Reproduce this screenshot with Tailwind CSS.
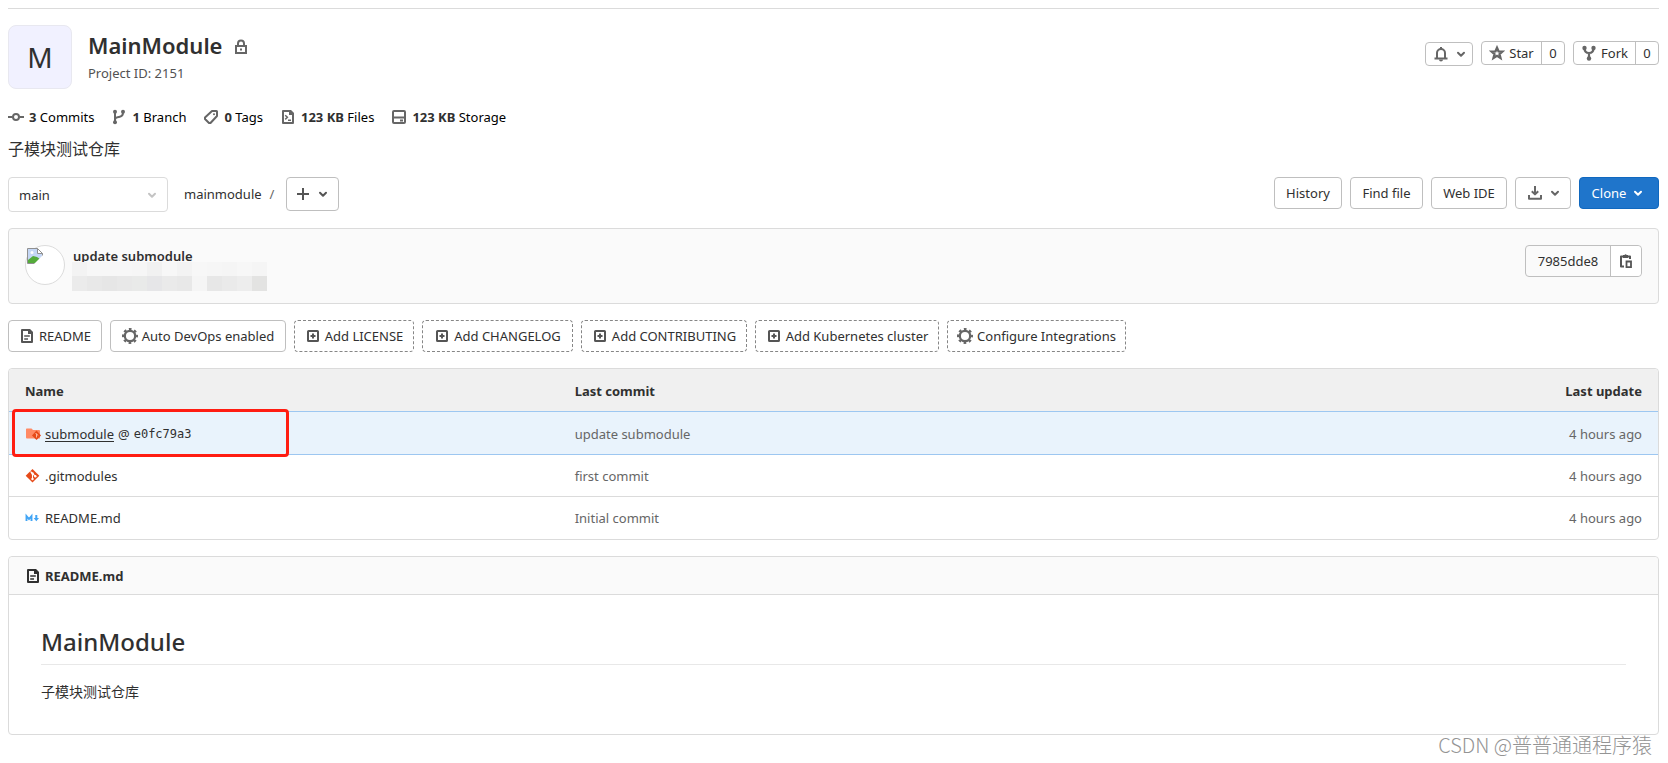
<!DOCTYPE html>
<html lang="en">
<head>
<meta charset="utf-8">
<title>MainModule</title>
<script src="https://cdn.jsdelivr.net/npm/@tailwindcss/browser@4"></script>
</head>
<body class="relative min-h-screen bg-white pt-2 pr-[9px] pb-7 pl-2 font-['Noto_Sans','Noto_Sans_CJK_SC',sans-serif] text-[13px] leading-5 text-[#303030]">
<svg class="hidden" aria-hidden="true">
  <symbol id="chevron" viewBox="0 0 16 16"><path d="M5 6.700 8 9.700l3-3" fill="none" stroke="currentColor" stroke-width="2" stroke-linecap="round" stroke-linejoin="round"/></symbol>
  <symbol id="lock" viewBox="0 0 16 16"><path d="M3 7h10v7H3zM5 7V4.500a3 3 0 0 1 6 0V7" fill="none" stroke="currentColor" stroke-width="2"/><path d="M7 9.500h2v2H7z" fill="currentColor"/></symbol>
  <symbol id="commit" viewBox="0 0 16 16"><path d="M0 8h4.500M11.500 8H16" fill="none" stroke="currentColor" stroke-width="2"/><circle cx="8" cy="8" r="3" fill="none" stroke="currentColor" stroke-width="2"/></symbol>
  <symbol id="branch" viewBox="0 0 16 16"><path d="M4 3v10M4 10.500c0-2 2-2.200 4-2.500s4-1 4-4.500" fill="none" stroke="currentColor" stroke-width="2"/><g fill="currentColor"><circle cx="4" cy="2.800" r="2"/><circle cx="4" cy="13.200" r="2"/><circle cx="12" cy="2.800" r="2"/></g></symbol>
  <symbol id="tag" viewBox="0 0 16 16"><path d="M9 2h4.500a.5.5 0 0 1 .5.5V7l-6.500 7H6l-4-4V8.500z" fill="none" stroke="currentColor" stroke-width="2" stroke-linejoin="round"/><circle cx="11" cy="5.200" r="1" fill="currentColor"/></symbol>
  <symbol id="codefile" viewBox="0 0 16 16"><path d="M3 2h7l3 3v9H3z" fill="none" stroke="currentColor" stroke-width="2" stroke-linejoin="round"/><path d="M9 1h2l3 3v2H9z" fill="currentColor"/><path d="M5.200 6.200 7.400 8.300 5.200 10.400M8 11.300h3" fill="none" stroke="currentColor" stroke-width="1.500"/></symbol>
  <symbol id="disk" viewBox="0 0 16 16"><rect x="2" y="2" width="12" height="12" rx="1" fill="none" stroke="currentColor" stroke-width="2"/><path d="M2 8.500h12M9 11.500h3" fill="none" stroke="currentColor" stroke-width="2"/></symbol>
  <symbol id="bell" viewBox="0 0 16 16"><path d="M4 12V7a4 4 0 0 1 8 0v5M1.500 12.500h13" fill="none" stroke="currentColor" stroke-width="2"/><path d="M7 1h2v2H7zM6 13.500h4a2 2 0 0 1-4 0z" fill="currentColor"/></symbol>
  <symbol id="star" viewBox="0 0 16 16"><path d="m8 2.800 1.500 3.500 4 .2-3 2.600 1 4L8 10.900l-3.500 2.200 1-4-3-2.600 4-.2z" fill="none" stroke="currentColor" stroke-width="2.300"/></symbol>
  <symbol id="fork" viewBox="0 0 16 16"><path d="M3.500 3c0 3.500 1 5 4.500 5s4.500-1.500 4.500-5M8 8v6" fill="none" stroke="currentColor" stroke-width="2.200"/><g fill="currentColor"><circle cx="3.500" cy="3" r="2.200"/><circle cx="12.500" cy="3" r="2.200"/><circle cx="8" cy="13.500" r="2.200"/></g></symbol>
  <symbol id="plus" viewBox="0 0 16 16"><path d="M8 2v12M2 8h12" fill="none" stroke="currentColor" stroke-width="2"/></symbol>
  <symbol id="download" viewBox="0 0 16 16"><path d="M8 1v8M4.800 6.200 8 9.400l3.200-3.200M2 10v3.800h12V10" fill="none" stroke="currentColor" stroke-width="2" stroke-linejoin="round"/></symbol>
  <symbol id="copy" viewBox="0 0 16 16"><path d="M6 13.500H3v-10h9V6" fill="none" stroke="currentColor" stroke-width="2" stroke-linejoin="round"/><path d="M5 2h1.500a1.200 1.200 0 0 1 2.200 0H10v3H5z" fill="currentColor"/><path d="M8.500 8.500H13v5.700H8.500z" fill="none" stroke="currentColor" stroke-width="1.800"/></symbol>
  <symbol id="doc" viewBox="0 0 16 16"><path d="M3 2h7l3 3v9H3z" fill="none" stroke="currentColor" stroke-width="2" stroke-linejoin="round"/><path d="M9 1h2l3 3v2H9z" fill="currentColor"/><path d="M5.200 8h5.600M5.200 11H9" fill="none" stroke="currentColor" stroke-width="1.500"/></symbol>
  <symbol id="gear" viewBox="0 0 16 16"><circle cx="8" cy="8" r="5.200" fill="none" stroke="currentColor" stroke-width="2.300"/><circle cx="8" cy="8" r="6.900" fill="none" stroke="currentColor" stroke-width="2.200" stroke-dasharray="2.710 2.710" stroke-dashoffset="1.355"/></symbol>
  <symbol id="addbox" viewBox="0 0 16 16"><rect x="3" y="3" width="10" height="10" rx=".6" fill="none" stroke="currentColor" stroke-width="2"/><path d="M8 5.500v5M5.500 8h5" fill="none" stroke="currentColor" stroke-width="2"/></symbol>
</svg>

<main class="border-t border-[#dbdbdb] pt-4">
  <header class="flex items-start justify-between">
    <div class="flex items-start gap-4">
      <div class="flex size-16 items-center justify-center rounded-lg border border-[#e8e8f0] bg-[#f1f1ff] text-[28px]">M</div>
      <div class="pt-1">
        <h1 class="flex h-8 items-center gap-2.5 text-[22px] font-semibold">MainModule
          <svg class="mt-1 size-4 text-[#666]"><use href="#lock"/></svg>
        </h1>
        <p class="mt-0.5 text-[#525252]">Project ID: 2151</p>
      </div>
    </div>
    <div class="flex items-start gap-2 pt-4">
      <button aria-label="Notifications" class="mt-px flex h-6 w-12 items-center justify-center gap-1 rounded border border-[#bfbfbf] pl-1 text-[#666]"><svg class="size-4"><use href="#bell"/></svg><svg class="size-4"><use href="#chevron"/></svg></button>
      <div class="flex h-6 w-[84px] rounded border border-[#bfbfbf]">
        <button class="flex flex-1 items-center justify-center gap-1"><svg class="size-4 text-[#666]"><use href="#star"/></svg>Star</button>
        <a href="#" class="flex w-[23px] items-center justify-center border-l border-[#bfbfbf]">0</a>
      </div>
      <div class="flex h-6 w-[86px] rounded border border-[#bfbfbf]">
        <button class="flex flex-1 items-center justify-center gap-1"><svg class="size-4 text-[#666]"><use href="#fork"/></svg>Fork</button>
        <a href="#" class="flex w-[23px] items-center justify-center border-l border-[#bfbfbf]">0</a>
      </div>
    </div>
  </header>

  <nav class="mt-[18px] flex gap-[17px] text-black">
    <a href="#" class="flex items-center gap-[5px]"><svg class="size-4 text-[#666]"><use href="#commit"/></svg><span><strong class="text-[#303030]">3</strong> Commits</span></a>
    <a href="#" class="flex items-center gap-[5px]"><svg class="size-4 text-[#666]"><use href="#branch"/></svg><span><strong class="text-[#303030]">1</strong> Branch</span></a>
    <a href="#" class="flex items-center gap-[5px]"><svg class="size-4 text-[#666]"><use href="#tag"/></svg><span><strong class="text-[#303030]">0</strong> Tags</span></a>
    <a href="#" class="flex items-center gap-[5px]"><svg class="size-4 text-[#666]"><use href="#codefile"/></svg><span><strong class="text-[#303030]">123 KB</strong> Files</span></a>
    <a href="#" class="flex items-center gap-[5px]"><svg class="size-4 text-[#666]"><use href="#disk"/></svg><span><strong class="text-[#303030]">123 KB</strong> Storage</span></a>
  </nav>

  <p class="mt-3 text-base leading-5">子模块测试仓库</p>

  <div class="mt-[18px] flex items-start justify-between">
    <div class="flex items-start">
      <div class="relative">
        <select aria-label="Branch" class="block h-[35px] w-40 appearance-none rounded border border-[#dbdbdb] bg-white px-2.5"><option>main</option></select>
        <svg class="pointer-events-none absolute top-2.5 right-2 size-4 text-[#c4c4c4]"><use href="#chevron"/></svg>
      </div>
      <div class="ml-4 flex h-[34px] items-center gap-2"><a href="#">mainmodule</a><span class="text-[#666]">/</span></div>
      <button aria-label="Add to tree" class="ml-3 flex h-[34px] w-[53px] items-center justify-center gap-1 rounded border border-[#bfbfbf] text-[#555]"><svg class="size-4"><use href="#plus"/></svg><svg class="size-4"><use href="#chevron"/></svg></button>
    </div>
    <div class="flex gap-2">
      <button class="h-8 w-17 rounded border border-[#bfbfbf]">History</button>
      <button class="h-8 w-[73px] rounded border border-[#bfbfbf]">Find file</button>
      <button class="h-8 w-19 rounded border border-[#bfbfbf]">Web IDE</button>
      <button aria-label="Download" class="flex h-8 w-14 items-center justify-center gap-1 rounded border border-[#bfbfbf] pl-1 text-[#666]"><svg class="size-4"><use href="#download"/></svg><svg class="size-4"><use href="#chevron"/></svg></button>
      <button class="flex h-8 w-20 items-center justify-center gap-1 rounded border border-[#1068bf] bg-[#1f75cb] text-white">Clone<svg class="size-4"><use href="#chevron"/></svg></button>
    </div>
  </div>

  <section class="mt-4 flex h-19 items-start justify-between rounded border border-[#dbdbdb] bg-[#fafafa] px-4 pt-4">
    <div class="relative flex gap-2">
      <div class="size-10 rounded-full border border-[#dcdcdc] bg-white pt-0.5 pl-px">
        <svg role="img" aria-label="avatar" class="size-4" viewBox="0 0 16 16"><path d="M.5.500h10l5 5v10H.5z" fill="#c5d7f5" stroke="#909090"/><path d="M1 15v-3l5-4 4 1 3 2-4 4z" fill="#54ab3a"/><path d="m16 7-9 9h9z" fill="#fff"/><path d="M10.500.500v5h5z" fill="#fff" stroke="#909090"/><circle cx="5" cy="4.500" r="1.500" fill="#fff"/></svg>
      </div>
      <a href="#" class="pt-px font-semibold">update submodule</a>
      <div class="absolute top-[17px] left-[47px] w-[195px] bg-[#fafafa]" aria-hidden="true">
        <div class="grid h-3.5 grid-cols-13">
          <i class="bg-[#f3f3f3]"></i><i class="bg-[#f7f7f7]"></i><i class="bg-[#f7f7f7]"></i><i class="bg-[#f7f7f7]"></i><i class="bg-[#f6f6f6]"></i><i class="bg-[#f1f1f1]"></i><i class="bg-[#f7f7f7]"></i><i class="bg-[#f3f3f3]"></i><i class="bg-[#f7f7f7]"></i><i class="bg-[#f6f6f6]"></i><i class="bg-[#f5f5f5]"></i><i class="bg-[#f7f7f7]"></i><i class="bg-[#f5f5f5]"></i>
        </div>
        <div class="grid h-[15px] grid-cols-13">
          <i class="bg-[#ebebeb]"></i><i class="bg-[#e8e8e8]"></i><i class="bg-[#e6e6e6]"></i><i class="bg-[#e8e8e8]"></i><i class="bg-[#e9eae9]"></i><i class="bg-[#e6e6e8]"></i><i class="bg-[#eaeaea]"></i><i class="bg-[#e8e8e8]"></i><i class="bg-[#f5f5f5]"></i><i class="bg-[#e7e7e7]"></i><i class="bg-[#eaeaea]"></i><i class="bg-[#ededed]"></i><i class="bg-[#e3e3e2]"></i>
        </div>
      </div>
    </div>
    <div class="flex h-8 w-[117px] rounded border border-[#bfbfbf]">
      <span class="flex flex-1 items-center justify-center">7985dde8</span>
      <button aria-label="Copy commit SHA" class="flex w-[31px] items-center justify-center rounded-r border-l border-[#bfbfbf] bg-white text-[#555]"><svg class="size-4"><use href="#copy"/></svg></button>
    </div>
  </section>

  <div class="mt-4 flex gap-2">
    <a href="#" class="flex h-8 w-[94px] items-center justify-center gap-1 rounded border border-[#bfbfbf]"><svg class="size-4 text-[#555]"><use href="#doc"/></svg>README</a>
    <a href="#" class="flex h-8 w-44 items-center justify-center gap-1 rounded border border-[#bfbfbf]"><svg class="size-4 text-[#666]"><use href="#gear"/></svg>Auto DevOps enabled</a>
    <a href="#" class="flex h-8 w-30 items-center justify-center gap-1 rounded border border-dashed border-[#868686]"><svg class="size-4 text-[#555]"><use href="#addbox"/></svg>Add LICENSE</a>
    <a href="#" class="flex h-8 w-[151px] items-center justify-center gap-1 rounded border border-dashed border-[#868686]"><svg class="size-4 text-[#555]"><use href="#addbox"/></svg>Add CHANGELOG</a>
    <a href="#" class="flex h-8 w-[166px] items-center justify-center gap-1 rounded border border-dashed border-[#868686]"><svg class="size-4 text-[#555]"><use href="#addbox"/></svg>Add CONTRIBUTING</a>
    <a href="#" class="flex h-8 w-46 items-center justify-center gap-1 rounded border border-dashed border-[#868686]"><svg class="size-4 text-[#555]"><use href="#addbox"/></svg>Add Kubernetes cluster</a>
    <a href="#" class="flex h-8 w-[179px] items-center justify-center gap-1 rounded border border-dashed border-[#868686]"><svg class="size-4 text-[#666]"><use href="#gear"/></svg>Configure Integrations</a>
  </div>

  <div class="relative mt-4 rounded border border-[#dbdbdb]">
    <table class="w-full table-fixed border-separate border-spacing-0 text-[#666]">
      <thead>
        <tr class="h-[42px] text-left text-[#303030]"><th class="w-1/3 rounded-tl bg-[#f0f0f0] px-4 pt-0.5 font-bold">Name</th><th class="bg-[#f0f0f0] px-4 pt-0.5 font-bold">Last commit</th><th class="w-1/4 rounded-tr bg-[#f0f0f0] px-4 pt-0.5 text-right font-bold">Last update</th></tr>
      </thead>
      <tbody>
        <tr class="h-11 bg-[#e9f3fc]">
          <td class="border-y border-[#9dc7f1] px-4 pt-0.5 text-[#303030]"><div class="flex items-center gap-1">
            <svg class="size-4" viewBox="0 0 16 16"><path d="M1.500 2.500h5L8 4h6a1 1 0 0 1 1 1v7.500H2a1 1 0 0 1-1-1V3.500a1 1 0 0 1 .5-1z" fill="#ff8a65"/><path d="m11.500 4.500 4.500 5-4.500 4.500L7 9.500z" fill="#e64a19"/><path d="m10.500 7 1 1v3.500m0-3.500 1.800 1.600" fill="none" stroke="#ffc4ae" stroke-width=".9"/></svg>
            <a href="#" class="underline underline-offset-2">submodule</a><span>@</span><a href="#" class="font-['DejaVu_Sans_Mono',monospace] text-xs">e0fc79a3</a></div></td>
          <td class="border-y border-[#9dc7f1] px-4 pt-0.5"><a href="#">update submodule</a></td><td class="border-y border-[#9dc7f1] px-4 pt-0.5 text-right">4 hours ago</td>
        </tr>
        <tr class="h-[42px]">
          <td class="border-b border-[#dbdbdb] px-4 text-[#303030]"><a href="#" class="flex items-center gap-1">
            <svg class="size-4" viewBox="0 0 16 16"><path d="m7.500 1 6.800 6.800-6.800 6.800L.700 7.800z" fill="#e64a19"/><path d="m5.500 3.500 2 2v5.800m0-5.800 2.700 2.700" fill="none" stroke="#fff" stroke-width="1.100"/><g fill="#fff"><circle cx="7.500" cy="5.500" r="1.200"/><circle cx="7.500" cy="11" r="1.200"/><circle cx="10.300" cy="8.200" r="1.200"/></g></svg>.gitmodules</a></td>
          <td class="border-b border-[#dbdbdb] px-4"><a href="#">first commit</a></td><td class="border-b border-[#dbdbdb] px-4 text-right">4 hours ago</td>
        </tr>
        <tr class="h-[42px]">
          <td class="px-4 text-[#303030]"><a href="#" class="flex items-center gap-1">
            <svg class="size-4" viewBox="0 0 16 16"><path d="M1.500 11V6l2.500 3 2.500-3v5" fill="none" stroke="#42a5f5" stroke-width="1.900"/><path d="M10.300 5h2v3H14l-2.700 3.200L8.600 8h1.700z" fill="#42a5f5"/></svg>README.md</a></td>
          <td class="px-4"><a href="#">Initial commit</a></td><td class="px-4 text-right">4 hours ago</td>
        </tr>
      </tbody>
    </table>
    <div class="pointer-events-none absolute top-10 left-[3px] h-12 w-[277px] rounded-sm border-3 border-[#ff1d12]"></div>
  </div>

  <article class="mt-4 rounded border border-[#dbdbdb]">
    <h3 class="flex h-[38px] items-center gap-1 rounded-t border-b border-[#dbdbdb] bg-[#fafafa] px-4 font-bold"><svg class="size-4"><use href="#doc"/></svg>README.md</h3>
    <div class="px-8 pt-[31px] pb-8">
      <h2 class="border-b border-[#e8e8e8] pb-1.5 text-[24px] leading-8 font-medium">MainModule</h2>
      <p class="mt-4 text-sm leading-[21px]">子模块测试仓库</p>
    </div>
  </article>
</main>
<div class="absolute right-4 bottom-1 font-['Noto_Sans_CJK_SC',sans-serif] text-xl leading-7 font-light text-[#949494]">CSDN @普普通通程序猿</div>
</body>
</html>
